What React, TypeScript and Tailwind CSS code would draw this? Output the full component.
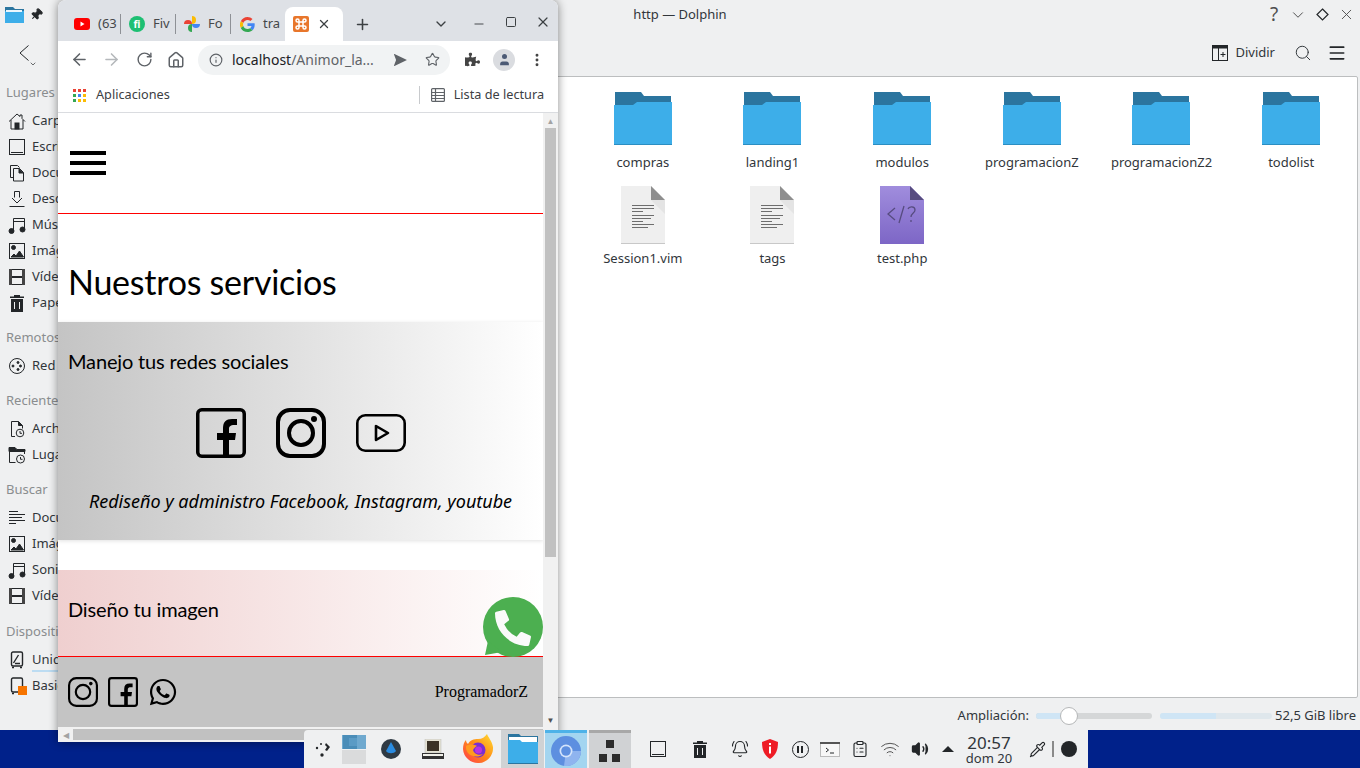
import React from "react";
import { FaWhatsapp, FaPuzzlePiece } from "react-icons/fa";
import {
  ArrowLeft, ArrowRight, RotateCw, Home, Info, Star, X, Plus, ChevronDown, Minus, Square, Search,
  Menu, Pin, BellRing, ClipboardList, Wifi, Volume2, Pipette, User, MoreVertical, SendHorizontal,
} from "lucide-react";

const noto = "font-['Noto_Sans',sans-serif]";

function FolderIcon() {
  return (
    <svg width="58" height="53" viewBox="0 0 58 53">
      <path d="M1 0h26l3 4h27v12H1z" fill="#2b759f" />
      <path d="M0 13h19l4-3h35v43H0z" fill="#3daee9" />
      <rect y="52" width="58" height="1" fill="#2b8ec2" />
    </svg>
  );
}

function DocIcon() {
  return (
    <svg width="44" height="58" viewBox="0 0 44 58">
      <path d="M0 0h30l14 14v44H0z" fill="#efefef" />
      <path d="M30 0l14 14H30z" fill="#8e8e8e" />
      <path d="M30 14h14v14z" fill="#e4e4e4" />
      <rect y="57" width="44" height="1" fill="#c8c8c8" />
      <g fill="#6e6e6e">
        <rect x="11" y="19" width="22" height="1" />
        <rect x="11" y="22" width="22" height="1" />
        <rect x="11" y="25" width="11" height="1" />
        <rect x="11" y="29" width="22" height="1" />
        <rect x="11" y="32" width="19" height="1" />
        <rect x="11" y="35" width="11" height="1" />
        <rect x="11" y="38" width="22" height="1" />
        <rect x="11" y="41" width="16" height="1" />
      </g>
    </svg>
  );
}

function PhpIcon() {
  return (
    <svg width="44" height="58" viewBox="0 0 44 58">
      <defs>
        <linearGradient id="php" x1="0" y1="0" x2="0" y2="1">
          <stop offset="0" stopColor="#a08ddd" />
          <stop offset="1" stopColor="#7d66c6" />
        </linearGradient>
      </defs>
      <path d="M0 0h30l14 14v44H0z" fill="url(#php)" />
      <path d="M30 0l14 14H30z" fill="#574c80" />
      <path d="M15 22l-7 6 7 6M24 20l-5 17" stroke="#574c80" strokeWidth="1.3" fill="none" />
      <path d="M28 23c1-3 7-3 7 1 0 3-4 3-4 7M31 34v2" stroke="#574c80" strokeWidth="1.3" fill="none" />
    </svg>
  );
}

function FileItem({ label, icon }: { label: string; icon: React.ReactNode }) {
  return (
    <div className="flex h-24 flex-col items-center">
      <div className="flex h-[61px] items-end">{icon}</div>
      <span className="mt-[5px] text-[13px] leading-[18px] text-[#31363b]">{label}</span>
    </div>
  );
}

function SideHead({ label, className = "" }: { label: string; className?: string }) {
  return <div className={`flex h-[18px] items-center whitespace-nowrap pl-[6px] text-[13px] text-[#8a8d8f] ${className}`}>{label}</div>;
}

function SideRow({ icon, label, under }: { icon: React.ReactNode; label: string; under?: boolean }) {
  return (
    <div className="relative flex h-[26px] items-center gap-[6px] whitespace-nowrap pl-[8px] text-[13px] text-[#31363b]">
      <span className="flex w-[18px] justify-center">{icon}</span>
      <span>{label}</span>
      {under && <span className="absolute bottom-[1px] left-[32px] h-[2px] w-[100px] bg-[#bcdcf2]" />}
    </div>
  );
}

function Ico({ children }: { children: React.ReactNode }) {
  return (
    <svg width="18" height="18" viewBox="0 0 18 18" fill="none" stroke="#232629" strokeWidth="1">
      {children}
    </svg>
  );
}

const IHome = () => (
  <Ico>
    <path d="M1 9.500L9 2l3 2.500V3h2v3.500l3 3M3 8v9h12V8" />
    <rect x="7" y="11" width="4" height="6" fill="#232629" />
  </Ico>
);
const IDesk = () => (
  <Ico>
    <rect x="1.500" y="1.500" width="15" height="15" />
    <path d="M3 14.500h12" />
  </Ico>
);
const IDocs = () => (
  <Ico>
    <path d="M5.500 13.500h-3V1.500h7l2 2" />
    <path d="M5.500 4.500h6l4 4v8.500h-10z" />
    <path d="M11 4.500v4.500h4.500" fill="#232629" />
  </Ico>
);
const IDown = () => (
  <Ico>
    <path d="M6.500 1.500h5v6M6.500 1.500v6M4 8l5 5 5-5M1.500 16.500h15" />
  </Ico>
);
const IMusic = () => (
  <Ico>
    <path d="M5.500 15V2.500h11V13M5.500 5.500h11" />
    <circle cx="3.500" cy="15" r="2.500" fill="#232629" />
    <circle cx="14.500" cy="13.500" r="2.500" fill="#232629" />
  </Ico>
);
const IImage = () => (
  <Ico>
    <rect x="1.500" y="1.500" width="15" height="15" />
    <circle cx="5.500" cy="5.500" r="2" fill="#232629" />
    <path d="M3 15l3-3 2 2 3.500-5 4 6z" fill="#232629" />
  </Ico>
);
const IFilm = () => (
  <Ico>
    <rect x="1.500" y="1.500" width="15" height="15" />
    <rect x="1" y="1" width="3" height="16" fill="#444" stroke="none" />
    <rect x="14" y="1" width="3" height="16" fill="#444" stroke="none" />
    <path d="M4 9h10" strokeWidth="2" />
  </Ico>
);
const ITrash = ({ c = "#232629" }: { c?: string }) => (
  <svg width="18" height="18" viewBox="0 0 18 18">
    <path d="M2 2.500h4V1h6v1.500h4V4H2z" fill={c} />
    <path d="M3 5h12v13H3z" fill={c} />
    <path d="M6.500 8v7M11.500 8v7" stroke="#eff0f1" strokeWidth="1" />
  </svg>
);
const INet = () => (
  <Ico>
    <circle cx="9" cy="9" r="7.500" />
    <circle cx="5" cy="9" r="1" fill="#232629" />
    <circle cx="10" cy="5.500" r="1" fill="#232629" />
    <circle cx="10" cy="12.500" r="1" fill="#232629" />
    <circle cx="12.500" cy="9" r="1" fill="#232629" />
  </Ico>
);
const IRecFile = () => (
  <Ico>
    <path d="M7 16.500H3.500v-15h7l4 4v3" />
    <path d="M10.500 1.500v4h4" fill="#232629" />
    <circle cx="12" cy="13" r="3.800" fill="#eff0f1" />
    <path d="M12 11v2.300h2" />
  </Ico>
);
const IRecPlace = () => (
  <Ico>
    <path d="M1 1.500h6l2 2h8v2H1z" fill="#232629" />
    <path d="M1.500 5v11.500h6M16.500 5v3" />
    <circle cx="12.500" cy="13" r="4" fill="#eff0f1" />
    <path d="M12.500 11v2.300h2" />
  </Ico>
);
const ILines = () => (
  <Ico>
    <path d="M1 2.500h9M1 5.500h16M1 8.500h13M1 11.500h16M1 14.500h7" />
  </Ico>
);
const IDrive = ({ badge }: { badge?: boolean }) => (
  <span className="relative block h-[18px] w-[18px]">
    <svg width="18" height="18" viewBox="0 0 18 18" fill="none" stroke="#232629" strokeWidth="1.400">
      <rect x="3.500" y="1" width="11" height="14" rx="1.500" />
      {!badge && <path d="M5.500 12l5-8M7 12.500h5" />}
      <path d="M4 16.500h2M12 16.500h2" />
    </svg>
    {badge && <span className="absolute left-[10px] top-[9px] h-[9px] w-[9px] bg-[#f67400]" />}
  </span>
);

function Sidebar() {
  return (
    <div className="w-[168px] shrink-0 pt-[8px]">
      <SideHead label="Lugares" />
      <div className="mt-[6px]">
        <SideRow icon={<IHome />} label="Carpeta personal" />
        <SideRow icon={<IDesk />} label="Escritorio" />
        <SideRow icon={<IDocs />} label="Documentos" />
        <SideRow icon={<IDown />} label="Descargas" />
        <SideRow icon={<IMusic />} label="Música" />
        <SideRow icon={<IImage />} label="Imágenes" />
        <SideRow icon={<IFilm />} label="Vídeos" />
        <SideRow icon={<ITrash />} label="Papelera" />
      </div>
      <SideHead label="Remotos" className="mt-[13px]" />
      <div className="mt-[6px]">
        <SideRow icon={<INet />} label="Red" />
      </div>
      <SideHead label="Recientes" className="mt-[13px]" />
      <div className="mt-[6px]">
        <SideRow icon={<IRecFile />} label="Archivos recientes" />
        <SideRow icon={<IRecPlace />} label="Lugares recientes" />
      </div>
      <SideHead label="Buscar" className="mt-[13px]" />
      <div className="mt-[6px]">
        <SideRow icon={<ILines />} label="Documentos" />
        <SideRow icon={<IImage />} label="Imágenes" />
        <SideRow icon={<IMusic />} label="Sonido" />
        <SideRow icon={<IFilm />} label="Vídeos" />
      </div>
      <SideHead label="Dispositivos" className="mt-[14px]" />
      <div className="mt-[6px]">
        <SideRow icon={<IDrive />} label="Unidad local" under />
        <SideRow icon={<IDrive badge />} label="Basic data" />
      </div>
    </div>
  );
}

function Dolphin() {
  return (
    <div className={`absolute left-0 top-0 flex h-[730px] w-[1360px] flex-col bg-[#eff0f1] text-[#31363b] ${noto}`}>
      <div className="flex h-[29px] shrink-0 items-center pr-[2px] text-[13px]">
        <div className="flex w-[50px] items-center gap-[6px] pl-[5px]">
          <svg width="19" height="16" viewBox="0 0 19 16">
            <path d="M0 0h8l2 2h9v4H0z" fill="#2b759f" />
            <path d="M0 4h19v12H0z" fill="#3daee9" />
            <path d="M1 3h16v2H1z" fill="#eaf6fd" />
          </svg>
          <Pin size={13} fill="#232629" color="#232629" className="rotate-45" />
        </div>
        <div className="flex-1 pl-[48px] text-center">http — Dolphin</div>
        <div className="flex w-[96px] items-center justify-between text-[#4d4d4d]">
          <span className="flex w-[24px] justify-center text-[19px] leading-none">?</span>
          <span className="flex w-[24px] justify-center"><ChevronDown size={18} strokeWidth={1.3} /></span>
          <span className="flex w-[24px] justify-center">
            <svg width="13" height="13" viewBox="0 0 13 13" fill="none" stroke="#232629" strokeWidth="1.200"><path d="M6.500 1L12 6.500 6.500 12 1 6.500z" /></svg>
          </span>
          <span className="flex w-[24px] justify-center"><X size={17} strokeWidth={1.3} /></span>
        </div>
      </div>
      <div className="flex h-[47px] shrink-0 items-center pl-[19px] pr-[13px] text-[13px]">
        <div className="relative h-[16px] w-[10px]">
          <svg width="10" height="16" viewBox="0 0 10 16" fill="none" stroke="#232629" strokeWidth="1"><path d="M9.500 .5L1 8l8.500 7.500" /></svg>
          <ChevronDown size={8} strokeWidth={2} className="absolute left-[10px] top-[15px] text-[#232629]" />
        </div>
        <svg width="8" height="16" viewBox="0 0 8 16" fill="none" stroke="#b5b7b8" className="ml-[29px]"><path d="M.5 .5L7.500 8 .5 15.500" /></svg>
        <div className="ml-auto flex items-center">
          <svg width="16" height="16" viewBox="0 0 16 16" className="mr-[7px]" fill="none" stroke="#232629">
            <rect x=".5" y=".5" width="15" height="15" />
            <rect x="0" y="0" width="16" height="3" fill="#232629" />
            <path d="M6.500 3v13M8.500 9.500h5M11 7v5" />
          </svg>
          <span>Dividir</span>
          <Search size={18} strokeWidth={1.3} className="ml-[19px]" />
          <Menu size={20} strokeWidth={2} color="#232629" className="ml-[15px]" />
        </div>
      </div>
      <div className="flex min-h-0 flex-1">
        <Sidebar />
        <div className="flex min-w-0 flex-1 flex-col">
          <div className="mr-[2px] flex flex-1 justify-end rounded-[2px] border border-[#bcbebf] bg-white pr-[1px] pt-[10px]">
            <div className="grid w-[778px] grid-cols-6 content-start">
              <FileItem label="compras" icon={<span className="mb-[3px] block"><FolderIcon /></span>} />
              <FileItem label="landing1" icon={<span className="mb-[3px] block"><FolderIcon /></span>} />
              <FileItem label="modulos" icon={<span className="mb-[3px] block"><FolderIcon /></span>} />
              <FileItem label="programacionZ" icon={<span className="mb-[3px] block"><FolderIcon /></span>} />
              <FileItem label="programacionZ2" icon={<span className="mb-[3px] block"><FolderIcon /></span>} />
              <FileItem label="todolist" icon={<span className="mb-[3px] block"><FolderIcon /></span>} />
              <FileItem label="Session1.vim" icon={<DocIcon />} />
              <FileItem label="tags" icon={<DocIcon />} />
              <FileItem label="test.php" icon={<PhpIcon />} />
            </div>
          </div>
          <div className="flex h-[32px] shrink-0 items-center justify-end pr-[4px] pt-[3px] text-[13px]">
            <span>Ampliación:</span>
            <div className="relative ml-[7px] h-[6px] w-[116px] rounded-full bg-[#d5d7d8]">
              <div className="h-full w-[33px] rounded-l-full bg-[#cfe5f5]" />
              <div className="absolute left-[24px] top-[-6px] h-[18px] w-[18px] rounded-full border border-[#b5b7b8] bg-white" />
            </div>
            <div className="ml-[8px] h-[6px] w-[112px] rounded-full bg-[#dfe7ec]">
              <div className="h-full w-[56px] rounded-l-full bg-[#cfe5f5]" />
            </div>
            <span className="ml-[3px]">52,5 GiB libre</span>
          </div>
        </div>
      </div>
    </div>
  );
}

function Tab({ icon, text }: { icon: React.ReactNode; text: string }) {
  return (
    <div className="flex h-[34px] w-[54px] items-center pl-[8px]">
      <span className="flex w-[16px] shrink-0 justify-center">{icon}</span>
      <span className="ml-[8px] whitespace-nowrap text-[13px] text-[#45474a]">{text}</span>
    </div>
  );
}

const Sep = () => <div className="h-[20px] w-px shrink-0 bg-[#8e9196]" />;

function GoogleG() {
  return (
    <svg width="15" height="15" viewBox="0 0 48 48">
      <path fill="#EA4335" d="M24 9.500c3.500 0 6.700 1.200 9.200 3.600l6.900-6.900C35.900 2.400 30.400 0 24 0 14.600 0 6.500 5.400 2.600 13.200l8 6.200C12.400 13.700 17.700 9.500 24 9.500z" />
      <path fill="#4285F4" d="M47 24.500c0-1.600-.1-3.100-.4-4.500H24v9h12.900c-.6 3-2.200 5.500-4.800 7.200l7.700 6c4.500-4.200 7.200-10.400 7.200-17.700z" />
      <path fill="#FBBC05" d="M10.500 28.600A14.500 14.500 0 0 1 10.500 19.400l-8-6.200a24 24 0 0 0 0 21.600z" />
      <path fill="#34A853" d="M24 48c6.500 0 11.900-2.100 15.900-5.800l-7.700-6c-2.100 1.400-4.900 2.300-8.200 2.300-6.300 0-11.600-4.200-13.500-9.900l-8 6.200C6.500 42.600 14.600 48 24 48z" />
    </svg>
  );
}

function Photos() {
  return (
    <svg width="16" height="16" viewBox="0 0 16 16">
      <path d="M8 8V0a4 4 0 0 1 0 8z" fill="#fbbc05" />
      <path d="M8 8H0a4 4 0 0 1 8 0z" fill="#ea4335" />
      <path d="M8 8v8a4 4 0 0 1 0-8z" fill="#34a853" />
      <path d="M8 8h8a4 4 0 0 1-8 0z" fill="#4285f4" />
    </svg>
  );
}

function Xampp() {
  return (
    <svg width="16" height="16" viewBox="0 0 16 16" fill="none" stroke="#fff" strokeWidth="1.500">
      <rect width="16" height="16" rx="2" fill="#e8762b" stroke="none" />
      <path d="M6 6h4v4H6zM6 6V4.500A1.500 1.500 0 1 0 4.500 6H6M10 6V4.500A1.500 1.500 0 1 1 11.500 6H10M6 10v1.500A1.500 1.500 0 1 1 4.500 10H6M10 10v1.500a1.500 1.500 0 1 0 1.500-1.500H10" />
    </svg>
  );
}

function AppsGrid() {
  const c = ["#ea4335", "#ea4335", "#ea4335", "#34a853", "#4285f4", "#fbbc05", "#34a853", "#fbbc05", "#fbbc05"];
  return (
    <div className="grid w-[13px] grid-cols-3 gap-[2px]">
      {c.map((v, i) => (
        <span key={i} className="h-[3px] w-[3px]" style={{ background: v }} />
      ))}
    </div>
  );
}

function FacebookLine({ size, sw }: { size: number; sw: number }) {
  return (
    <svg width={size} height={size} viewBox="0 0 50 50">
      <rect x={sw / 2} y={sw / 2} width={50 - sw} height={50 - sw} rx="4" fill="none" stroke="#000" strokeWidth={sw} />
      <path d="M27 48V32h-6v-7h6v-5c0-6 3-9 9-9h5v6h-3c-3 0-5 1-5 4v4h7l-1 7h-6v16z" fill="#000" />
    </svg>
  );
}

function InstagramLine({ size, sw }: { size: number; sw: number }) {
  return (
    <svg width={size} height={size} viewBox="0 0 50 50" fill="none" stroke="#000">
      <rect x={sw / 2} y={sw / 2} width={50 - sw} height={50 - sw} rx="12" strokeWidth={sw} />
      <circle cx="25" cy="25" r="12" strokeWidth={sw} />
      <circle cx="38" cy="11" r="3" fill="#000" stroke="none" />
    </svg>
  );
}

function YoutubeLine() {
  return (
    <svg width="50" height="38" viewBox="0 0 50 38" fill="none" stroke="#000" strokeWidth="2.600">
      <rect x="1.300" y="1.300" width="47.400" height="35.400" rx="8" />
      <path d="M20 12v14l12-7z" strokeLinejoin="round" />
    </svg>
  );
}

function WhatsappBig() {
  return (
    <svg width="60" height="60" viewBox="0 0 60 60">
      <circle cx="30" cy="30" r="30" fill="#4caf50" />
      <path d="M5 44L2 58l17-3z" fill="#4caf50" />
      <g transform="translate(12 13) scale(0.0703)">
        <path
          fill="#fafafa"
          d="M497.390 361.800l-112-48a24 24 0 0 0-28 6.900l-49.600 60.600A370.660 370.660 0 0 1 130.600 204.110l60.600-49.600a23.940 23.940 0 0 0 6.900-28l-48-112A24.160 24.160 0 0 0 122.600.610l-104 24A24 24 0 0 0 0 48c0 256.500 207.900 464 464 464a24 24 0 0 0 23.400-18.600l24-104a24.290 24.290 0 0 0-14.010-27.600z"
        />
      </g>
    </svg>
  );
}

function WebPage() {
  return (
    <div className="flex min-w-0 flex-1 flex-col overflow-hidden bg-white">
      <div className="flex h-[101px] shrink-0 items-center border-b border-[#ff0000] pl-[12px]">
        <div className="flex h-[24px] w-[36px] flex-col justify-between">
          <span className="h-[4px] bg-black" />
          <span className="h-[4px] bg-black" />
          <span className="h-[4px] bg-black" />
        </div>
      </div>
      <div className="flex h-[108px] shrink-0 items-end pb-[20px] pl-[10px] font-['Lato',sans-serif] text-[34px] leading-[40px] tracking-[-0.25px] text-black">
        Nuestros servicios
      </div>
      <div className="flex h-[218px] shrink-0 flex-col bg-gradient-to-r from-[#c4c4c4] to-white shadow-[0_1px_4px_rgba(0,0,0,0.12)]">
        <div className="pl-[10px] pt-[27px] font-['Lato',sans-serif] text-[20px] leading-[24px] tracking-[-0.16px] text-black">Manejo tus redes sociales</div>
        <div className="mt-[35px] flex items-center justify-center gap-[30px]">
          <FacebookLine size={50} sw={3.500} />
          <InstagramLine size={50} sw={4} />
          <YoutubeLine />
        </div>
        <div className={`mt-[32px] text-center text-[18px] italic leading-[22px] text-black ${noto}`}>
          Rediseño y administro Facebook, Instagram, youtube
        </div>
      </div>
      <div className="mt-[30px] h-[86px] shrink-0 bg-gradient-to-r from-[#efcfcf] to-white pl-[10px] pt-[27px] font-['Lato',sans-serif] text-[20px] leading-[24px] tracking-[-0.16px] text-black">
        Diseño tu imagen
      </div>
      <div className="flex h-[71px] shrink-0 items-center justify-between border-t border-[#ff0000] bg-[#c4c4c4] pl-[10px] pr-[15px]">
        <div className="flex items-center gap-[10px]">
          <InstagramLine size={30} sw={3.600} />
          <FacebookLine size={30} sw={3.600} />
          <FaWhatsapp size={30} color="#000" />
        </div>
        <span className="font-['Liberation_Serif',serif] text-[16px] text-black">ProgramadorZ</span>
      </div>
    </div>
  );
}

function Chrome() {
  return (
    <div className={`absolute left-[58px] top-0 flex h-[742px] w-[500px] flex-col overflow-hidden rounded-t-[8px] bg-white shadow-[0_0_10px_rgba(0,0,0,0.45)] ${noto}`}>
      <div className="flex h-[41px] shrink-0 items-end bg-[#dee1e6] pl-[8px]">
        <div className="flex items-center">
          <Tab
            text="(63"
            icon={
              <svg width="16" height="12" viewBox="0 0 16 12">
                <rect width="16" height="12" rx="3" fill="#f00" />
                <path d="M6.500 3.500v5l4-2.500z" fill="#fff" />
              </svg>
            }
          />
          <Sep />
          <Tab
            text="Fiv"
            icon={
              <span className="flex h-[16px] w-[16px] items-center justify-center rounded-full bg-[#1dbf73] text-[10px] font-bold leading-none text-white">fi</span>
            }
          />
          <Sep />
          <Tab text="Fo" icon={<Photos />} />
          <Sep />
          <Tab text="tra" icon={<GoogleG />} />
        </div>
        <div className="flex h-[34px] w-[58px] items-center rounded-t-[8px] bg-white pl-[8px]">
          <Xampp />
          <X size={14} strokeWidth={2.2} className="ml-[8px] text-[#3c4043]" />
        </div>
        <div className="flex h-[34px] flex-1 items-center text-[#3c4043]">
          <Plus size={17} strokeWidth={2.2} className="ml-[11px]" />
          <ChevronDown size={16} strokeWidth={2} className="ml-[62px] -mt-[1px]" />
          <Minus size={14} strokeWidth={1.6} className="ml-[23px]" />
          <Square size={12} strokeWidth={2} className="ml-[19px] -mt-[5px]" />
          <X size={16} strokeWidth={1.8} className="ml-[18px] -mt-[5px]" />
        </div>
      </div>
      <div className="flex h-[37px] shrink-0 items-center pl-[12px] text-[#5f6368]">
        <ArrowLeft size={19} strokeWidth={2} />
        <ArrowRight size={19} strokeWidth={2} className="ml-[13px] text-[#b5b8bb]" />
        <RotateCw size={17} strokeWidth={2} className="ml-[15px]" />
        <Home size={18} strokeWidth={2} className="ml-[14px]" />
        <div className="ml-[13px] flex h-[30px] w-[252px] items-center rounded-full bg-[#f1f3f4] pl-[11px] text-[14px]">
          <Info size={14} strokeWidth={2} />
          <span className="ml-[9px] w-[146px] whitespace-nowrap text-[#202124]">
            localhost<span className="text-[#5f6368]">/Animor_la...</span>
          </span>
          <SendHorizontal size={16} strokeWidth={0} fill="#5f6368" className="ml-[14px]" />
          <Star size={15} strokeWidth={1.8} className="ml-[17px]" />
        </div>
        <FaPuzzlePiece size={15} className="ml-[15px] text-[#444]" />
        <span className="ml-[13px] flex h-[22px] w-[22px] items-center justify-center rounded-full bg-[#dadce0]">
          <User size={15} fill="#4c5a75" strokeWidth={0} />
        </span>
        <MoreVertical size={16} strokeWidth={2.4} className="ml-[14px] text-[#444]" />
      </div>
      <div className="flex h-[35px] shrink-0 items-center border-b border-[#dadce0] pl-[15px] pr-[14px] text-[12.700px] text-[#3c4043]">
        <AppsGrid />
        <span className="ml-[10px]">Aplicaciones</span>
        <span className="ml-auto h-[18px] w-px bg-[#c8cacd]" />
        <svg width="14" height="14" viewBox="0 0 14 14" fill="none" stroke="#5f6368" strokeWidth="1.200" className="ml-[11px]">
          <rect x=".6" y=".6" width="12.800" height="12.800" rx="1" />
          <path d="M4.500 1v12M1 4.500h12M1 7.500h12M1 10.500h12" />
        </svg>
        <span className="ml-[9px]">Lista de lectura</span>
      </div>
      <div className="relative flex min-h-0 flex-1 flex-col">
        <div className="flex min-h-0 flex-1">
          <WebPage />
          <div className="flex w-[15px] shrink-0 flex-col bg-[#f1f1f1]">
            <div className="flex h-[15px] items-center justify-center text-[8px] leading-none text-[#a3a3a3]">▲</div>
            <div className="mx-[2px] h-[429px] bg-[#c1c1c1]" />
            <div className="mt-auto flex h-[15px] items-center justify-center text-[8px] leading-none text-[#505050]">▼</div>
          </div>
        </div>
        <div className="flex h-[15px] shrink-0 items-center bg-[#f1f1f1]">
          <div className="flex w-[15px] justify-center text-[8px] leading-none text-[#a3a3a3]">◀</div>
          <div className="h-[11px] w-[470px] bg-[#c1c1c1]" />
        </div>
        <span className="absolute left-[425px] top-[484px]"><WhatsappBig /></span>
      </div>
    </div>
  );
}

function Cell({ w, active, children }: { w: string; active?: string; children?: React.ReactNode }) {
  return <div className={`flex h-full items-center justify-center ${w} ${active ?? ""}`}>{children}</div>;
}

function Taskbar() {
  return (
    <div className={`absolute bottom-0 left-[304px] flex h-[38px] w-[784px] items-center rounded-tl-[4px] bg-[#eff0f1] text-[#31363b] ${noto}`}>
      <Cell w="w-[38px]">
        <svg width="16" height="16" viewBox="0 0 16 16" fill="#232629">
          <circle cx="2" cy="7" r="1.200" />
          <circle cx="6" cy="3" r="1" />
          <circle cx="7" cy="14" r="1.700" />
          <path d="M11 2l4 4-3 4-2-1 2-3-2-2z" />
        </svg>
      </Cell>
      <Cell w="w-[28px] justify-start">
        <div className="flex h-[29px] w-[24px] flex-col">
          <div className="flex h-[14px] items-center bg-[#6fa9cf] pl-[1px]">
            <div className="flex h-full w-[14px] items-center bg-[#4a8db8] pl-[6px]"><div className="h-[8px] w-[10px] bg-[#5b9bc5]" /></div>
          </div>
          <div className="mt-[1px] flex-1 bg-[#dadbdc]" />
        </div>
      </Cell>
      <Cell w="w-[42px]">
        <svg width="20" height="20" viewBox="0 0 20 20">
          <circle cx="10" cy="10" r="10" fill="#2f3a44" />
          <path d="M10 3l5 9c-2 3-8 3-10 0z" fill="#2a8be0" />
        </svg>
      </Cell>
      <Cell w="w-[42px]">
        <svg width="22" height="20" viewBox="0 0 22 20">
          <rect x="3" y="0" width="16" height="14" fill="#e4e2d4" stroke="#bbb" strokeWidth=".5" />
          <rect x="5" y="2" width="12" height="10" fill="#3a3226" />
          <rect x="0" y="14" width="22" height="6" fill="#333" />
          <rect x="1" y="15" width="20" height="2" fill="#f1f1ea" />
        </svg>
      </Cell>
      <Cell w="w-[47px]">
        <svg width="32" height="32" viewBox="0 0 32 32">
          <defs>
            <linearGradient id="ff" x1="0" y1="1" x2="1" y2="0">
              <stop offset="0" stopColor="#ff3750" />
              <stop offset=".5" stopColor="#ff8a16" />
              <stop offset="1" stopColor="#ffdf33" />
            </linearGradient>
          </defs>
          <path d="M25 1c1 3 5 7 6 13a15 15 0 1 1-30 2c0-4 1-7 3-9 0 2 1 3 2 4 2-4 6-5 10-5 4 0 7-2 9-5z" fill="url(#ff)" />
          <circle cx="16" cy="17" r="7.500" fill="#7a2fd0" />
          <circle cx="16.500" cy="17" r="3.500" fill="#b833e1" />
          <path d="M4 13c3-2 8-2 11 0-2 1-3 2-4 4 1 4 6 6 10 4-4 4-12 3-15-1-2-2-2-5-2-7z" fill="#ff9a1f" />
        </svg>
      </Cell>
      <Cell w="w-[43px]" active="bg-[#d0d2d4]">
        <svg width="30" height="30" viewBox="0 0 30 30">
          <path d="M0 0h11l2 2h17v8H0z" fill="#2b759f" />
          <path d="M1 3h28v5H1z" fill="#fff" />
          <path d="M0 6h12l2 2h16v22H0z" fill="#3daee9" />
          <rect y="29" width="30" height="1" fill="#2b759f" />
        </svg>
      </Cell>
      <div className="ml-[1px] flex h-full w-[42px] flex-col bg-[#a3d5f0]">
        <div className="h-[3px] bg-[#4db2e8]" />
        <div className="flex flex-1 items-center justify-center">
          <svg width="30" height="30" viewBox="0 0 30 30">
            <circle cx="15" cy="15" r="15" fill="#5d8fe0" />
            <path d="M15 15l-2 15A15 15 0 0 0 30 15z" fill="#8fb4ef" />
            <circle cx="15" cy="15" r="6.500" fill="#d4e4fb" />
            <circle cx="15" cy="15" r="4.800" fill="#5d8fe0" />
          </svg>
        </div>
      </div>
      <div className="ml-[2px] flex h-full w-[42px] flex-col bg-[#d0d2d4]">
        <div className="h-[3px] bg-[#a8a8a8]" />
        <div className="flex flex-1 items-center justify-center">
          <svg width="22" height="22" viewBox="0 0 22 22" fill="#2c2c2c">
            <rect x="7" y="0" width="8" height="8" />
            <rect x="0" y="14" width="8" height="8" />
            <rect x="13" y="14" width="8" height="8" />
          </svg>
        </div>
      </div>
      <Cell w="w-[6px]" />
      <Cell w="w-[42px]">
        <svg width="16" height="16" viewBox="0 0 16 16" fill="none" stroke="#232629">
          <rect x=".5" y=".5" width="15" height="15" />
          <path d="M2 13.500h12" />
        </svg>
      </Cell>
      <Cell w="w-[42px]"><ITrash /></Cell>
      <Cell w="w-[4px]" />
      <Cell w="w-[30px]"><BellRing size={18} strokeWidth={1.5} color="#232629" /></Cell>
      <Cell w="w-[30px]">
        <svg width="18" height="20" viewBox="0 0 18 20">
          <path d="M9 0l8 3c0 8-2 13-8 17C3 16 1 11 1 3z" fill="#ee1c25" />
          <rect x="8" y="4" width="2" height="2" fill="#fff" />
          <rect x="8" y="7.500" width="2" height="7" fill="#fff" />
        </svg>
      </Cell>
      <Cell w="w-[30px]">
        <span className="flex h-[17px] w-[17px] items-center justify-center gap-[2px] rounded-full border border-[#232629]">
          <span className="h-[7px] w-[2px] bg-[#232629]" />
          <span className="h-[7px] w-[2px] bg-[#232629]" />
        </span>
      </Cell>
      <Cell w="w-[30px]">
        <svg width="20" height="15" viewBox="0 0 20 15" fill="none">
          <rect x=".5" y=".5" width="19" height="14" fill="#f7f7f7" stroke="#bbb" />
          <rect width="20" height="2" fill="#555" />
          <path d="M6 6l2.500 2L6 10M10 11h4" stroke="#232629" />
        </svg>
      </Cell>
      <Cell w="w-[30px]"><ClipboardList size={18} strokeWidth={1.5} color="#232629" /></Cell>
      <Cell w="w-[30px]"><Wifi size={20} strokeWidth={1.2} color="#555" /></Cell>
      <Cell w="w-[30px]"><Volume2 size={18} strokeWidth={1.8} fill="#232629" color="#232629" /></Cell>
      <Cell w="w-[26px]"><span className="h-0 w-0 border-x-[6px] border-b-[6px] border-x-transparent border-b-[#232629]" /></Cell>
      <div className="flex w-[56px] flex-col items-center">
        <span className="text-[17px] leading-[17px]">20:57</span>
        <span className="text-[13px] leading-[14px]">dom 20</span>
      </div>
      <div className="ml-[8px] flex w-[24px] justify-center"><Pipette size={17} strokeWidth={1.6} color="#232629" /></div>
      <span className="ml-[3px] h-[16px] w-[2px] bg-[#8a8a8a]" />
      <span className="ml-[7px] h-[16px] w-[16px] rounded-full bg-[#232629]" />
    </div>
  );
}

export default function App() {
  return (
    <div className="relative h-[768px] w-[1360px] overflow-hidden bg-[#00218a]">
      <Dolphin />
      <Chrome />
      <Taskbar />
    </div>
  );
}
